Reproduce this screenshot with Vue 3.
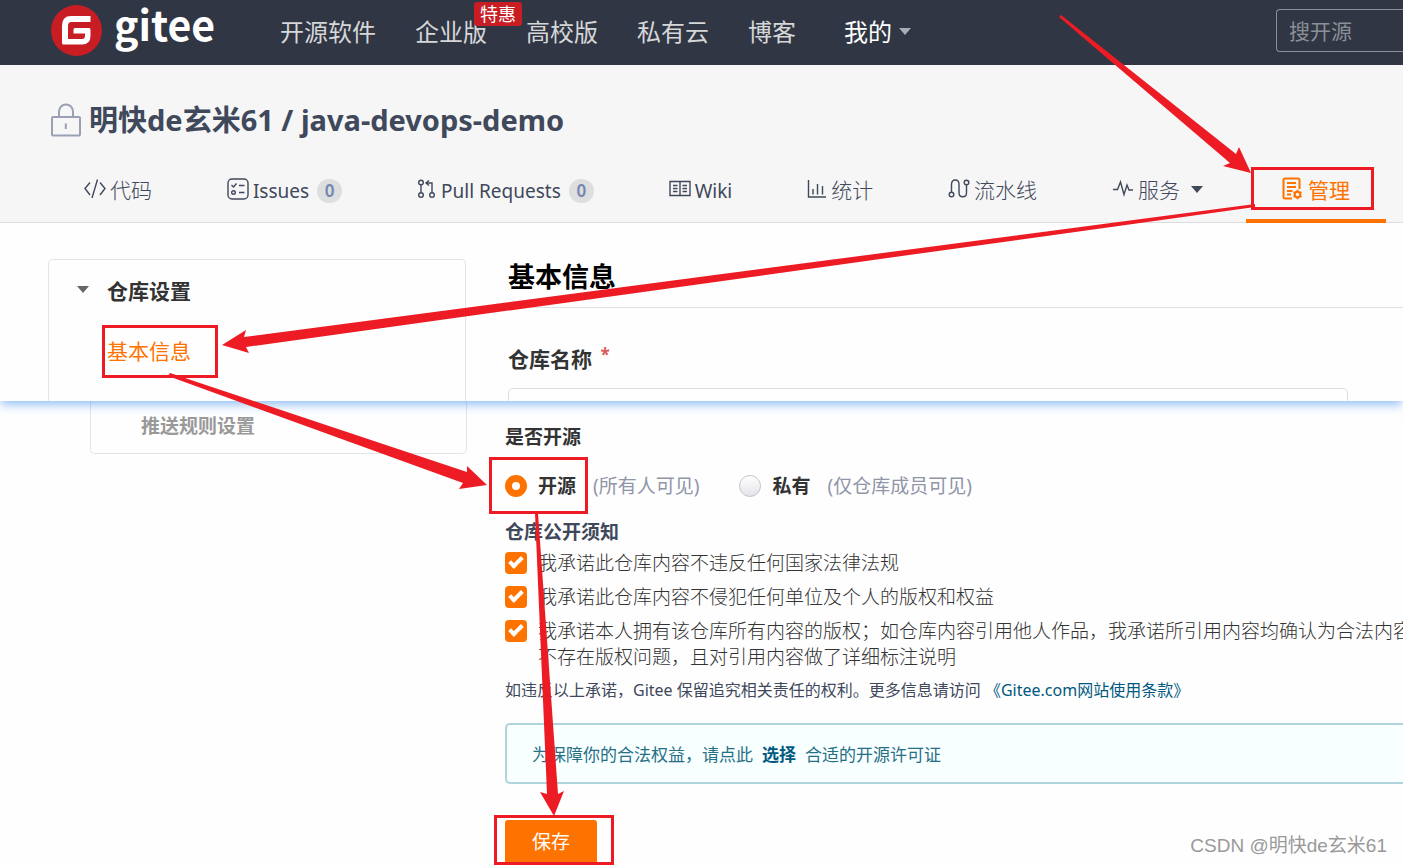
<script setup>
import { ref } from 'vue'

const visibility = ref('public')
const promises = ref([
  { id: 'law', checked: true, lines: ['我承诺此仓库内容不违反任何国家法律法规'] },
  { id: 'rights', checked: true, lines: ['我承诺此仓库内容不侵犯任何单位及个人的版权和权益'] },
  {
    id: 'own',
    checked: true,
    lines: [
      '我承诺本人拥有该仓库所有内容的版权；如仓库内容引用他人作品，我承诺所引用内容均确认为合法内容',
      '不存在版权问题，且对引用内容做了详细标注说明',
    ],
  },
])
const arrows = [
  '1059,17 1061,15 1236,154 1239,147 1251,173 1223,166 1230,163',
  '1255,204 1255,207 246,347 249,353 222,345 246,330 244,337',
  '168,376 170,373 467,472 467,466 487,485 459,489 463,483',
  '535,513 538,513 558,794 564,791 554,816 540,792 547,794',
]
const frames = [
  { x: 1252.5, y: 168.5, w: 120, h: 40 },
  { x: 103.5, y: 326.5, w: 113, h: 50 },
  { x: 490.5, y: 458.5, w: 96, h: 54 },
  { x: 495.5, y: 816.5, w: 117, h: 47 },
]
</script>

<template>
  <div class="page">
    <header class="topbar">
      <a class="brand" href="#" aria-label="gitee">
        <svg width="51" height="51" viewBox="0 0 51 51" aria-hidden="true">
          <circle cx="25.500" cy="25.500" r="25.500" fill="#c71d23" />
          <path
            d="M39.500 11V17H20.500Q17 17 17 20.500V33.500Q17 34 17.500 34H31Q34 34 34 31V28.500H22.500V24.500Q22.500 23 24 23H38Q39.500 23 39.500 24.500V31Q39.500 39.500 31 39.500H12.500Q11 39.500 11 38V20.500Q11 11 20 11Z"
            fill="#fff"
          />
        </svg>
        <span class="wordmark">gitee</span>
      </a>
      <nav class="topnav">
        <a href="#">开源软件</a>
        <a href="#" class="with-tag">企业版<span class="tag">特惠</span></a>
        <a href="#">高校版</a>
        <a href="#">私有云</a>
        <a href="#">博客</a>
        <a href="#" class="mine">我的<i class="caret"></i></a>
      </nav>
      <input class="search" type="search" placeholder="搜开源" aria-label="搜开源" />
    </header>

    <section class="repo">
      <h1 class="repo-title">
        <svg width="30" height="34" viewBox="0 0 30 34" fill="none" stroke="#9aa1b5" stroke-width="2" aria-hidden="true">
          <rect x="1" y="14" width="28" height="18.500" rx="1" />
          <path d="M8 14V8.500A7 7 0 0 1 22 8.500V14M14.800 20.500V26" />
        </svg>
        <a href="#">明快de玄米61 / java-devops-demo</a>
      </h1>
      <nav class="tabs">
        <a href="#">
          <svg width="22" height="22" viewBox="0 0 22 22"><path d="M6 4.500 1 10.500 6 17M16 4.500 21 10.500 16 17M13.500 1.500 8 20" /></svg>
          代码
        </a>
        <a href="#">
          <svg width="22" height="22" viewBox="0 0 22 22">
            <rect x="1" y="1" width="20" height="20" rx="4" />
            <path d="M4.500 7 6.500 9 9.500 5.500M12 7.500H17.500M12 14.500H17.500" /><circle cx="6.500" cy="14.500" r="1.800" />
          </svg>
          <span class="latin">Issues</span><span class="count">0</span>
        </a>
        <a href="#">
          <svg width="20" height="22" viewBox="0 0 20 22">
            <circle cx="4" cy="4.500" r="2.300" /><circle cx="4" cy="17" r="2.300" /><circle cx="15" cy="17" r="2.300" />
            <path d="M4 7V14.500M15 14.500V5H9M12 2.500 9 5 12 7.500" />
          </svg>
          <span class="latin">Pull Requests</span><span class="count">0</span>
        </a>
        <a href="#">
          <svg width="22" height="22" viewBox="0 0 22 22">
            <path d="M1 3.500H21V17.500H1ZM11 3.500V17.500M4 7.500H8.500M4 10.500H8.500M4 13.500H8.500M13.500 7.500H18M13.500 10.500H18M13.500 13.500H18" />
          </svg>
          <span class="latin">Wiki</span>
        </a>
        <a href="#">
          <svg width="20" height="22" viewBox="0 0 20 22"><path d="M1.500 2V19H19M6 11V16.500M10.500 6V16.500M15.500 8V16.500" /></svg>
          统计
        </a>
        <a href="#">
          <svg width="22" height="22" viewBox="0 0 22 22">
            <circle cx="3.500" cy="16.500" r="2.300" /><circle cx="18.500" cy="4.500" r="2.300" />
            <path d="M3.500 14V6.500Q3.500 2 7.300 2T11 6.500V14.500Q11 18.800 14.800 18.800T18.500 14.500V7" />
          </svg>
          流水线
        </a>
        <a href="#">
          <svg width="22" height="22" viewBox="0 0 22 22"><path d="M1 11.500H5.500L8.500 4 12 16.500 15 7 17 12H21" /></svg>
          服务<i class="caret dark"></i>
        </a>
        <a href="#" class="active" aria-current="page">
          <svg width="22" height="24" viewBox="0 0 22 24" class="bold">
            <path d="M17.500 12V3Q17.500 1.500 16 1.500H3Q1.500 1.500 1.500 3V20Q1.500 21.500 3 21.500H10M5 6H14M5 10H14M5 14H10.500M5 17.500H9" />
            <circle cx="15.500" cy="17.500" r="2.800" />
            <path d="M15.500 12.800V14.700M15.500 20.300V22.200M11.500 15.200 13 16M18 19 19.500 19.800M19.500 15.200 18 16M13 19 11.500 19.800" />
          </svg>
          管理
        </a>
      </nav>
    </section>

    <section class="upper columns">
      <aside class="card">
        <button type="button" class="group"><i class="caret grey"></i>仓库设置</button>
        <a href="#" class="current">基本信息</a>
      </aside>
      <div class="main">
        <h2>基本信息</h2>
        <label class="field-label" for="repo-name">仓库名称 <sup>*</sup></label>
        <div class="field"><input id="repo-name" type="text" /></div>
      </div>
    </section>

    <section class="lower columns">
      <aside class="card tail"><a href="#">推送规则设置</a></aside>
      <form class="main" @submit.prevent>
        <h3 id="open-label">是否开源</h3>
        <div class="choices" role="radiogroup" aria-labelledby="open-label">
          <label><input v-model="visibility" type="radio" name="visibility" value="public" /><strong>开源</strong><span>(所有人可见)</span></label>
          <label><input v-model="visibility" type="radio" name="visibility" value="private" /><strong>私有</strong><span>(仅仓库成员可见)</span></label>
        </div>
        <h3 class="notice-title">仓库公开须知</h3>
        <div class="promises">
          <label v-for="p in promises" :key="p.id">
            <input v-model="p.checked" type="checkbox" />
            <span><span v-for="line in p.lines" :key="line" class="line">{{ line }}</span></span>
          </label>
        </div>
        <p class="terms">如违反以上承诺，Gitee 保留追究相关责任的权利。更多信息请访问 <a href="#">《Gitee.com网站使用条款》</a></p>
        <p class="license">为保障你的合法权益，请点此<a href="#">选择</a>合适的开源许可证</p>
        <div class="actions">
          <button type="submit">保存</button>
          <span class="watermark">CSDN @明快de玄米61</span>
        </div>
      </form>
    </section>

    <svg class="marks" width="1403" height="865" viewBox="0 0 1403 865" aria-hidden="true">
      <rect v-for="f in frames" :key="f.y" :x="f.x" :y="f.y" :width="f.w" :height="f.h" />
      <polygon v-for="a in arrows" :key="a" :points="a" />
    </svg>
  </div>
</template>

<style>
body {
  margin: 0;
  background: #fefefe;
}
</style>

<style scoped>
.page {
  position: relative;
  min-height: 100vh;
  overflow: hidden;
  color: #40485b;
  font-family: "Noto Sans", "Noto Sans CJK SC", sans-serif;
  font-size: 19px;
  line-height: 26px;
}
.page *,
.page *::after {
  box-sizing: border-box;
}
a {
  color: inherit;
  text-decoration: none;
}
h1,
h2,
h3,
p {
  margin: 0;
}
input,
button {
  margin: 0;
  font: inherit;
}
.caret {
  display: inline-block;
  border: 6px solid transparent;
  border-top: 7px solid #a9adb5;
  border-bottom: 0;
}
.caret.dark {
  border-top-color: #40485b;
  margin: 0 4px 0 7px;
}
.caret.grey {
  border-top-color: #666;
}

.topbar {
  display: flex;
  align-items: center;
  height: 65px;
  padding-left: 51px;
  background: #303643;
}
.brand {
  display: flex;
  align-items: center;
  gap: 12px;
  width: 229px;
  height: 61px;
  align-self: flex-start;
}
.wordmark {
  color: #fff;
  font: 700 41px/60px "Noto Sans CJK SC", sans-serif;
  padding-bottom: 16px;
}
.topnav {
  display: flex;
  gap: 39px;
  padding-bottom: 2px;
  color: #d6d7d9;
  font-size: 24px;
  line-height: 36px;
  white-space: nowrap;
}
.with-tag {
  position: relative;
}
.tag {
  position: absolute;
  top: -12px;
  left: 59px;
  padding: 0 6px;
  border-radius: 3px;
  background: #c71d23;
  color: #fff;
  font-size: 18px;
  line-height: 24px;
}
.mine {
  display: flex;
  align-items: center;
  gap: 7px;
  margin-left: 9px;
  color: #fff;
}
.search {
  width: 127px;
  height: 43px;
  margin: 0 0 4px auto;
  padding: 0 12px;
  border: 1px solid #8b8f97;
  border-right: 0;
  border-radius: 4px 0 0 4px;
  background: transparent;
  color: #fff;
  font-size: 21px;
  outline: 0;
}
.search::placeholder {
  color: #8b8f97;
}

.repo {
  position: relative;
  z-index: 1;
  padding-top: 35px;
  border-bottom: 1px solid #dcddde;
  background: #f6f6f6;
}
.repo-title {
  display: flex;
  align-items: center;
  gap: 8px;
  padding-left: 51px;
  font-size: 29px;
  line-height: 40px;
}
.tabs {
  display: flex;
  justify-content: space-between;
  height: 61px;
  margin: 22px 17px -1px 48px;
  font-size: 21px;
  font-weight: 300;
  white-space: nowrap;
}
.tabs a {
  display: flex;
  align-items: center;
  gap: 4px;
  padding: 0 36px 6px;
}
.tabs svg {
  fill: none;
  stroke: currentColor;
  stroke-width: 1.4;
  margin-bottom: 2px;
}
.tabs .bold {
  stroke-width: 2;
}
.latin {
  padding-top: 2px;
  font-size: 19px;
  font-weight: 400;
}
.count {
  min-width: 25px;
  margin: 2px 0 0 4px;
  border-radius: 12px;
  background: #dcdee0;
  color: #7486b0;
  font-size: 17px;
  font-weight: 600;
  line-height: 24px;
  text-align: center;
}
.tabs .active {
  padding-bottom: 2px;
  border-bottom: 4px solid #fe7300;
  color: #fe7300;
  font-weight: 400;
}

.columns {
  display: flex;
}
.main {
  flex: 1;
  min-width: 0;
}
.upper {
  position: relative;
  padding: 36px 0 0 48px;
  gap: 42px;
  background: #fefefe;
  box-shadow: 0 4px 10px -1px rgba(60, 140, 240, 0.6);
}
.card {
  width: 418px;
  border: 1px solid #dfe5e9;
  border-bottom: 0;
  border-radius: 5px 5px 0 0;
}
.upper .card {
  display: flex;
  flex-direction: column;
  gap: 32px;
  padding: 17px 28px 0;
  font-size: 21px;
  line-height: 28px;
}
.group {
  display: flex;
  align-items: center;
  gap: 18px;
  padding: 0;
  border: 0;
  background: none;
  color: #333;
  font-weight: 700;
}
.group .caret {
  margin-bottom: 4px;
}
.current {
  padding-left: 30px;
  color: #fe7300;
}
h2 {
  padding-bottom: 12px;
  border-bottom: 1px solid #e0e1e3;
  color: #000;
  font-size: 27px;
  line-height: 36px;
}
.field-label {
  display: block;
  margin: 37px 0 15px;
  color: #333;
  font-size: 21px;
  font-weight: 700;
  line-height: 28px;
}
.field-label sup {
  margin-left: 3px;
  color: #db5a5a;
  font-size: 17px;
  line-height: 0;
  vertical-align: 6px;
}
.field {
  height: 13px;
  margin-right: 55px;
  overflow: hidden;
}
.field input {
  width: 100%;
  height: 48px;
  border: 1px solid #dcdee6;
  border-radius: 5px;
  background: transparent;
  outline: 0;
}

.lower {
  align-items: flex-start;
  gap: 38px;
  padding-left: 90px;
}
.card.tail {
  width: 377px;
  padding: 12px 50px 14px;
  border: 1px solid #dfe5e9;
  border-top: 0;
  border-radius: 0 0 5px 5px;
  color: #999;
  font-weight: 700;
}
.lower .main {
  padding-top: 23px;
  white-space: nowrap;
}
h3 {
  color: #333;
  font-size: 19px;
}
.choices {
  display: flex;
  gap: 40px;
  margin: 23px 0 20px;
}
.choices label {
  display: flex;
  align-items: center;
}
.choices strong {
  margin: 0 17px 0 11px;
  color: #333;
}
.choices span {
  color: #9095a8;
}
input[type="radio"] {
  appearance: none;
  width: 22px;
  height: 22px;
  border: 1px solid #c3c5cb;
  border-radius: 50%;
  background: linear-gradient(#fff, #e2e3e7);
}
input[type="radio"]:checked {
  border: 7px solid #fe7300;
  background: #fff;
}
.notice-title {
  color: #40485b;
}
.promises {
  display: grid;
  gap: 8px;
  margin: 5px 0 7px;
  color: #333;
  font-weight: 300;
}
.promises label {
  display: flex;
  gap: 11px;
}
.line {
  display: block;
}
input[type="checkbox"] {
  appearance: none;
  display: grid;
  place-items: center;
  flex: none;
  width: 22px;
  height: 22px;
  margin-top: 2px;
  border-radius: 4px;
  background: #fe7300;
}
input[type="checkbox"]::after {
  content: "";
  width: 14px;
  height: 8px;
  margin-bottom: 4px;
  border: solid #fff;
  border-width: 0 0 4px 4px;
  transform: rotate(-45deg);
}
.terms {
  font-size: 16px;
}
.terms a {
  color: #005980;
}
.license {
  margin: 20px 0 36px;
  padding: 17px 25px 15px;
  border: 2px solid #b0d4dc;
  border-right: 0;
  border-radius: 5px 0 0 5px;
  background: #f8ffff;
  color: #276f86;
  font-size: 17px;
  line-height: 25px;
}
.license a {
  margin: 0 9px;
  color: #005980;
  font-weight: 700;
}
.actions {
  display: flex;
  justify-content: space-between;
  align-items: flex-end;
  padding-right: 16px;
}
.actions button {
  height: 44px;
  padding: 0 27px;
  border: 0;
  border-radius: 3px;
  background: #fe7300;
  color: #fff;
}
.watermark {
  padding-bottom: 5px;
  color: #999;
  font-family: "Liberation Sans", "Noto Sans CJK SC", sans-serif;
  font-size: 19px;
}
.marks {
  position: absolute;
  z-index: 2;
  top: 0;
  left: 0;
  pointer-events: none;
}
.marks rect {
  fill: none;
  stroke: #ed1c24;
  stroke-width: 3;
}
.marks polygon {
  fill: #ed1c24;
}
</style>
